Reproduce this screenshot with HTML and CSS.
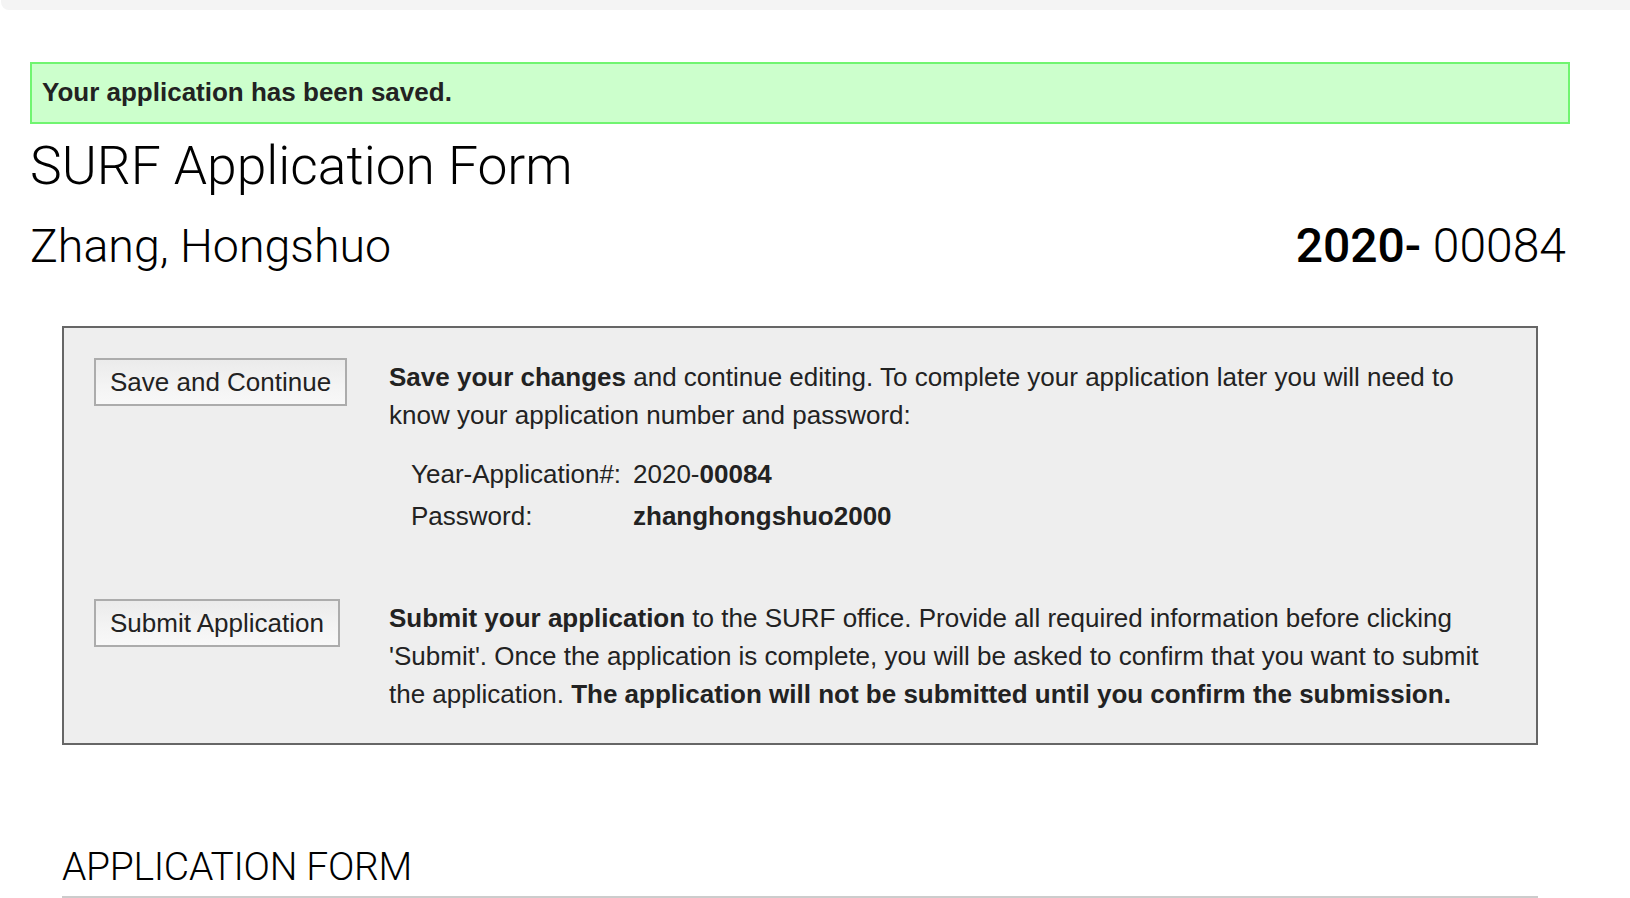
FILE: index.html
```html
<!DOCTYPE html>
<html lang="en">
<head>
<meta charset="utf-8">
<title>SURF Application Form</title>
<link rel="stylesheet" href="styles.css">
</head>
<body>
<div class="topbar"></div>
<main class="page">
  <div class="alert">Your application has been saved.</div>
  <h1 class="title">SURF Application Form</h1>
  <div class="namerow">
    <h2 class="name">Zhang, Hongshuo</h2>
    <div class="appno"><b>2020-</b> 00084</div>
  </div>

  <section class="panel">
    <button class="btn" type="button">Save and Continue</button>
    <div class="desc">
      <p><b>Save your changes</b> and continue editing. To complete your application later you will need to know your application number and password:</p>
      <dl class="creds">
        <dt>Year-Application#:</dt><dd>2020-<b>00084</b></dd>
        <dt>Password:</dt><dd><b>zhanghongshuo2000</b></dd>
      </dl>
    </div>

    <button class="btn" type="button">Submit Application</button>
    <div class="desc">
      <p><b>Submit your application</b> to the SURF office. Provide all required information before clicking 'Submit'. Once the application is complete, you will be asked to confirm that you want to submit the application. <b>The application will not be submitted until you confirm the submission.</b></p>
    </div>
  </section>

  <h2 class="section-title">APPLICATION FORM</h2>
</main>
</body>
</html>
```

FILE: styles.css
```css
* { box-sizing: border-box; }

html, body {
  margin: 0;
  padding: 0;
  background: #ffffff;
}

body {
  font-family: "Liberation Sans", Arial, Helvetica, sans-serif;
  color: #222222;
  overflow: hidden;
}

.topbar {
  height: 10px;
  margin-left: 1px;
  background: #f4f4f4;
  border-bottom-left-radius: 8px;
}

.page {
  width: 1540px;
  margin-left: 30px;
}

.alert {
  margin-top: 52px;
  border: 2px solid #70f570;
  background: #ccffcc;
  padding: 12px 10px 13px;
  font-size: 26px;
  line-height: 33px;
  font-weight: bold;
  color: #222222;
}

.title {
  margin: 12px 0 0;
  font-family: Roboto, "Liberation Sans", sans-serif;
  font-weight: 300;
  font-size: 53.4px;
  line-height: 60px;
  color: #000000;
}

.namerow {
  margin-top: 24px;
  display: flex;
  justify-content: space-between;
  align-items: baseline;
  font-family: Roboto, "Liberation Sans", sans-serif;
  line-height: 52px;
  color: #000000;
}

.name {
  margin: 0;
  font-size: 46.5px;
  font-weight: 300;
}

.appno {
  font-size: 48px;
  font-weight: 300;
  padding-right: 4px;
}

.appno b {
  font-weight: 500;
}

.panel {
  margin: 54px 32px 0;
  border: 2px solid #666666;
  background: #eeeeee;
  padding: 30px 30px 30px 30px;
  display: grid;
  grid-template-columns: 295px 1fr;
  row-gap: 62px;
  align-items: start;
}

.btn {
  justify-self: start;
  font-family: "Liberation Sans", Arial, Helvetica, sans-serif;
  font-size: 26px;
  line-height: 30px;
  color: #222222;
  padding: 7px 14px;
  border: 2px solid #acacac;
  border-radius: 0;
  background: linear-gradient(to bottom, #ebebeb 0%, #f4f4f4 60%, #f8f8f8 100%);
}

.desc {
  font-size: 26px;
  line-height: 38px;
}

.desc p {
  margin: 0;
}

.creds {
  margin: 20px 0 0 22px;
  display: grid;
  grid-template-columns: 222px auto;
  line-height: 41.5px;
}

.creds dt,
.creds dd {
  margin: 0;
}

.section-title {
  margin: 100px 32px 0;
  padding-bottom: 7px;
  border-bottom: 2px solid #cccccc;
  font-family: Roboto, "Liberation Sans", sans-serif;
  font-weight: 300;
  font-size: 39px;
  line-height: 44px;
  color: #000000;
  letter-spacing: -0.3px;
}
```
